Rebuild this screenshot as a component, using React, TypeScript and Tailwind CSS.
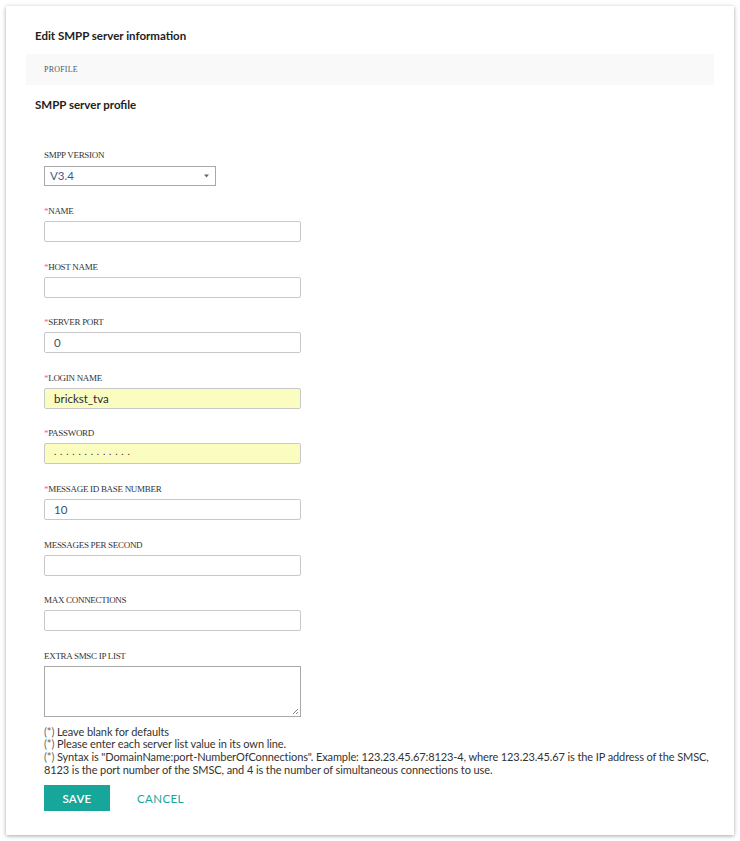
import React from "react";

const sans = "font-['Lato','Segoe_UI','Open_Sans',sans-serif]";

type Field = {
  label: string;
  required?: boolean;
  value?: string;
  filled?: boolean;
  dots?: boolean;
};

const fields: Field[] = [
  { label: "NAME", required: true },
  { label: "HOST NAME", required: true },
  { label: "SERVER PORT", required: true, value: "0" },
  { label: "LOGIN NAME", required: true, value: "brickst_tva", filled: true },
  { label: "PASSWORD", required: true, value: ". . . . . . . . . . . . .", filled: true, dots: true },
  { label: "MESSAGE ID BASE NUMBER", required: true, value: "10" },
  { label: "MESSAGES PER SECOND" },
  { label: "MAX CONNECTIONS" },
];

function Label({ text, required }: { text: string; required?: boolean }) {
  return (
    <div className="h-[12px] leading-[12px] text-[9px] text-[#333] font-['Liberation_Serif',serif] tracking-[-0.3px]">
      {required && <span className="text-[#e8697a]">*</span>}
      {text}
    </div>
  );
}

export default function App() {
  return (
    <div className="bg-white min-h-[841px] w-[740px] pt-[6px] pl-[6px]">
      <div className={`w-[728px] h-[829px] bg-white shadow-[0_1px_4px_rgba(0,0,0,0.35)] px-[20px] ${sans}`}>
        <div className="pt-[22px] pl-[9px] text-[11.5px] leading-[16px] font-bold text-[#222]">
          Edit SMPP server information
        </div>
        <div className="mt-[10px] h-[31px] bg-[#f9f9f9] pl-[18px] flex items-center">
          <span className="text-[8px] text-[#555] font-['Liberation_Serif',serif] tracking-[0.2px]">PROFILE</span>
        </div>
        <div className="mt-[12px] pl-[9px] text-[11.5px] leading-[16px] font-bold text-[#222]">
          SMPP server profile
        </div>

        <div className="pl-[18px] mt-[36px]">
          <Label text="SMPP VERSION" />
          <div className="mt-[5px] w-[172px] h-[20px] border border-[#a9a9a9] flex items-center justify-between pl-[5px] pr-[6px]">
            <span className="text-[11.5px] text-[#3d5b88]">V3.4</span>
            <svg width="5" height="4" viewBox="0 0 5 4">
              <path d="M0 0.5h5L2.5 3.5z" fill="#666" />
            </svg>
          </div>

          <div className="mt-[19px]">
            {fields.map((f) => (
              <div key={f.label} className="mb-[18.6px]">
                <Label text={f.label} required={f.required} />
                <div
                  className={`mt-[4px] w-[257px] h-[21px] border border-[#c9c9c9] rounded-[2px] flex items-center pl-[9px] text-[11.5px] ${
                    f.filled ? "bg-[#fafcc0] text-[#2a2a3a]" : "bg-white text-[#3c4f6e]"
                  }`}
                >
                  {f.dots ? (
                    <span className="text-[#4a2020] tracking-[0.6px] text-[10px] -mt-[4px]">{f.value}</span>
                  ) : (
                    f.value
                  )}
                </div>
              </div>
            ))}
            <div>
              <Label text="EXTRA SMSC IP LIST" />
              <div className="mt-[4px] w-[257px] h-[51px] border border-[#a9a9a9] relative">
                <svg className="absolute right-[1px] bottom-[1px]" width="8" height="8" viewBox="0 0 8 8">
                  <path d="M7 2L2 7M7 5L5 7" stroke="#888" strokeWidth="1" />
                </svg>
              </div>
            </div>
          </div>

          <div className="mt-[9px] text-[11px] leading-[12.6px] text-[#333] tracking-[-0.1px]">
            <div>
              <span className="text-[#666]">(*)</span> Leave blank for defaults
            </div>
            <div>
              <span className="text-[#666]">(*)</span> Please enter each server list value in its own line.
            </div>
            <div>
              <span className="text-[#666]">(*)</span> Syntax is "DomainName:port-NumberOfConnections". Example: 123.23.45.67:8123-4, where 123.23.45.67 is the IP address of the SMSC, 8123 is the port number of the SMSC, and 4 is the number of simultaneous connections to use.
            </div>
          </div>

          <div className="mt-[9px] flex items-center">
            <button className="w-[66px] h-[26px] bg-[#17a79a] text-white text-[11.5px] font-semibold tracking-[0.3px]">
              SAVE
            </button>
            <button className="ml-[27px] text-[11.5px] text-[#17a79a] tracking-[0.4px]">CANCEL</button>
          </div>
        </div>
      </div>
    </div>
  );
}
